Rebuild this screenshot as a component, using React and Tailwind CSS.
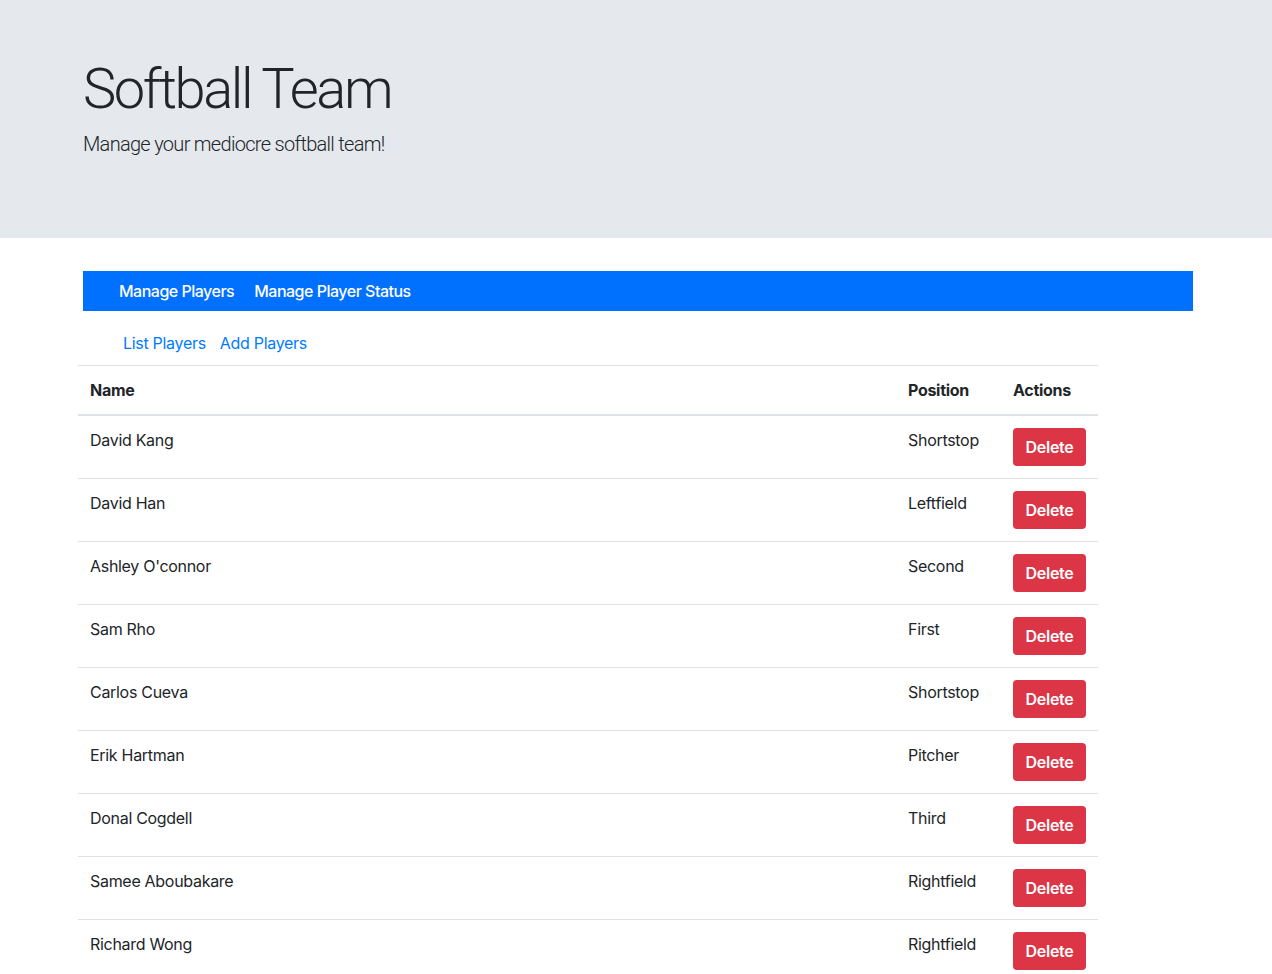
const players = [
  { name: 'David Kang', position: 'Shortstop' },
  { name: 'David Han', position: 'Leftfield' },
  { name: "Ashley O'connor", position: 'Second' },
  { name: 'Sam Rho', position: 'First' },
  { name: 'Carlos Cueva', position: 'Shortstop' },
  { name: 'Erik Hartman', position: 'Pitcher' },
  { name: 'Donal Cogdell', position: 'Third' },
  { name: 'Samee Aboubakare', position: 'Rightfield' },
  { name: 'Richard Wong', position: 'Rightfield' },
];

export default function App() {
  return (
    <div className="min-h-screen bg-white text-[#212529] font-['Inter',sans-serif] tracking-[-0.3px]">
      {/* Jumbotron */}
      <div className="bg-[#e5e9ee] h-[238px] px-[83px] pt-[56px] font-['Roboto',sans-serif]">
        <h1 className="text-[56px] font-light leading-[1.2] tracking-[-2.4px]">Softball Team</h1>
        <p className="text-[20px] font-light leading-[30px] mt-[6px] tracking-[-0.7px]">Manage your mediocre softball team!</p>
      </div>

      <div className="w-[1110px] ml-[83px] mt-[33px]">
        {/* Main nav */}
        <nav className="bg-[#0070ff] h-10 flex items-center pl-[36px] gap-5 tracking-[-0.5px]">
          <a className="text-white font-medium text-[16px]">Manage Players</a>
          <a className="text-white font-medium text-[16px]">Manage Player Status</a>
        </nav>

        {/* Sub nav */}
        <div className="flex gap-[14px] pl-[40px] h-[54px] items-center pt-[10px]">
          <a className="text-[#007bff] text-[16px]">List Players</a>
          <a className="text-[#007bff] text-[16px]">Add Players</a>
        </div>

        {/* Table */}
        <table className="w-[1020px] -ml-[5px] text-[16px] border-collapse">
          <thead>
            <tr className="border-t border-[#dee2e6] border-b-2">
              <th className="text-left font-bold px-3 py-3 leading-6">Name</th>
              <th className="text-left font-bold px-3 py-3 leading-6 w-[105px]">Position</th>
              <th className="text-left font-bold px-3 py-3 leading-6 w-[97px]">Actions</th>
            </tr>
          </thead>
          <tbody>
            {players.map((p) => (
              <tr key={p.name} className="border-t border-[#dee2e6] align-top">
                <td className="px-3 py-3 leading-6">{p.name}</td>
                <td className="px-3 py-3 leading-6">{p.position}</td>
                <td className="px-3 py-3 leading-6">
                  <button className="bg-[#dc3545] text-white font-semibold rounded px-3 h-[38px] w-[73px] text-[16px]">
                    Delete
                  </button>
                </td>
              </tr>
            ))}
          </tbody>
        </table>
      </div>
    </div>
  );
}
